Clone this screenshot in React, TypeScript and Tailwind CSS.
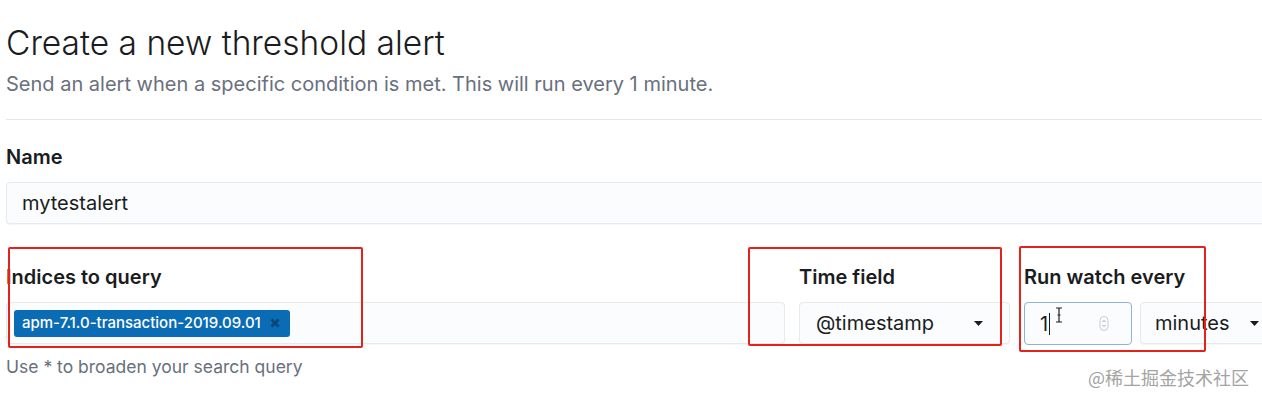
import React from 'react';

function Caret() {
  return (
    <svg width="9" height="5" viewBox="0 0 9 5" className="shrink-0">
      <path d="M0 0h9L4.5 5z" fill="#1a1c21" />
    </svg>
  );
}

function Spinner() {
  return (
    <svg width="10" height="15" viewBox="0 0 10 15" className="shrink-0">
      <rect x="1" y="0.5" width="8" height="14" rx="4" fill="none" stroke="#c8ccd2" />
      <path d="M3.5 6l1.5-1.6L6.5 6M3.5 9l1.5 1.6L6.5 9" fill="none" stroke="#9aa0a8" strokeWidth="0.9" />
    </svg>
  );
}

function IBeam() {
  return (
    <svg width="8" height="16" viewBox="0 0 8 16" className="absolute left-[30px] top-[4px]">
      <path d="M1 1h2.5L4 1.8 4.5 1H7M4 1.8v12.4M1 15h2.5l.5-.8.5.8H7M2.5 8h3" fill="none" stroke="#222" strokeWidth="1.2" />
    </svg>
  );
}

const inputCls =
  'flex h-[42px] shrink-0 items-center rounded-[4px] border border-[#e6e9ee] bg-[#fbfcfd] shadow-[0_1px_1px_rgba(152,162,179,0.12)]';

export default function App() {
  return (
    <div className="relative h-[401px] w-[1262px] overflow-hidden bg-white pl-[6px] font-['Inter',sans-serif] text-[#1a1c21]">
      <h1 className="pt-[23px] text-[33.5px] font-light leading-[40px]">Create a new threshold alert</h1>
      <p className="mt-[7px] text-[20px] leading-[28px] text-[#69707d]">
        Send an alert when a specific condition is met. This will run every 1 minute.
      </p>
      <div className="mt-[21px] h-px w-[1280px] bg-[#e3e6ea]" />

      <div className="mt-[23px] text-[20px] font-semibold leading-[28px]">Name</div>
      <div className={`${inputCls} mt-[11px] w-[1280px] px-[15px] text-[20px]`}>mytestalert</div>

      <div className="mt-[39px] flex w-[1300px] items-start gap-[14px]">
        <div className="w-[779px] shrink-0">
          <div className="text-[20px] font-semibold leading-[28px]">Indices to query</div>
          <div className={`${inputCls} mt-[11px] px-[7px]`}>
            <span className="flex h-[27px] items-center gap-[9px] rounded-[3px] bg-[#0a6cb4] pl-[8px] pr-[10px] text-[15px] font-medium text-white">
              apm-7.1.0-transaction-2019.09.01
              <svg width="10" height="10" viewBox="0 0 10 10">
                <path d="M1.5 1.5l7 7M8.5 1.5l-7 7" stroke="#0a4577" strokeWidth="2.6" />
              </svg>
            </span>
          </div>
          <div className="mt-[11px] text-[17.5px] leading-[24px] text-[#69707d]">Use * to broaden your search query</div>
        </div>

        <div className="w-[211px] shrink-0">
          <div className="text-[20px] font-semibold leading-[28px]">Time field</div>
          <div className={`${inputCls} mt-[11px] justify-between pl-[16px] pr-[26px] text-[20px]`}>
            @timestamp
            <Caret />
          </div>
        </div>

        <div className="shrink-0">
          <div className="text-[20px] font-semibold leading-[28px]">Run watch every</div>
          <div className="mt-[11px] flex gap-[8px]">
            <div className="relative flex h-[43px] w-[108px] shrink-0 items-center justify-between rounded-[4px] border-[1.5px] border-[#8fb2d8] bg-[#fbfcfd] pl-[15px] pr-[22px] text-[20px]">
              <span className="flex items-center">
                1<span className="ml-[1px] h-[22px] w-px bg-[#1a1c21]" />
              </span>
              <IBeam />
              <Spinner />
            </div>
            <div className={`${inputCls} w-[146px] justify-between pl-[14px] pr-[26px] text-[20px]`}>
              minutes
              <Caret />
            </div>
          </div>
        </div>
      </div>

      <div className="pointer-events-none absolute left-[8px] top-[247px] h-[101px] w-[355px] rounded-[2px] border-2 border-[#e3221c]" />
      <div className="pointer-events-none absolute left-[748px] top-[247px] h-[99px] w-[254px] rounded-[2px] border-2 border-[#e3221c]" />
      <div className="pointer-events-none absolute left-[1019px] top-[246px] h-[106px] w-[187px] rounded-[2px] border-2 border-[#e3221c]" />

      <div className="absolute left-[1088px] top-[365px] font-['Noto_Sans_CJK_SC',sans-serif] text-[18px] leading-[24px] text-[#a3a3a3]">
        @稀土掘金技术社区
      </div>
    </div>
  );
}
